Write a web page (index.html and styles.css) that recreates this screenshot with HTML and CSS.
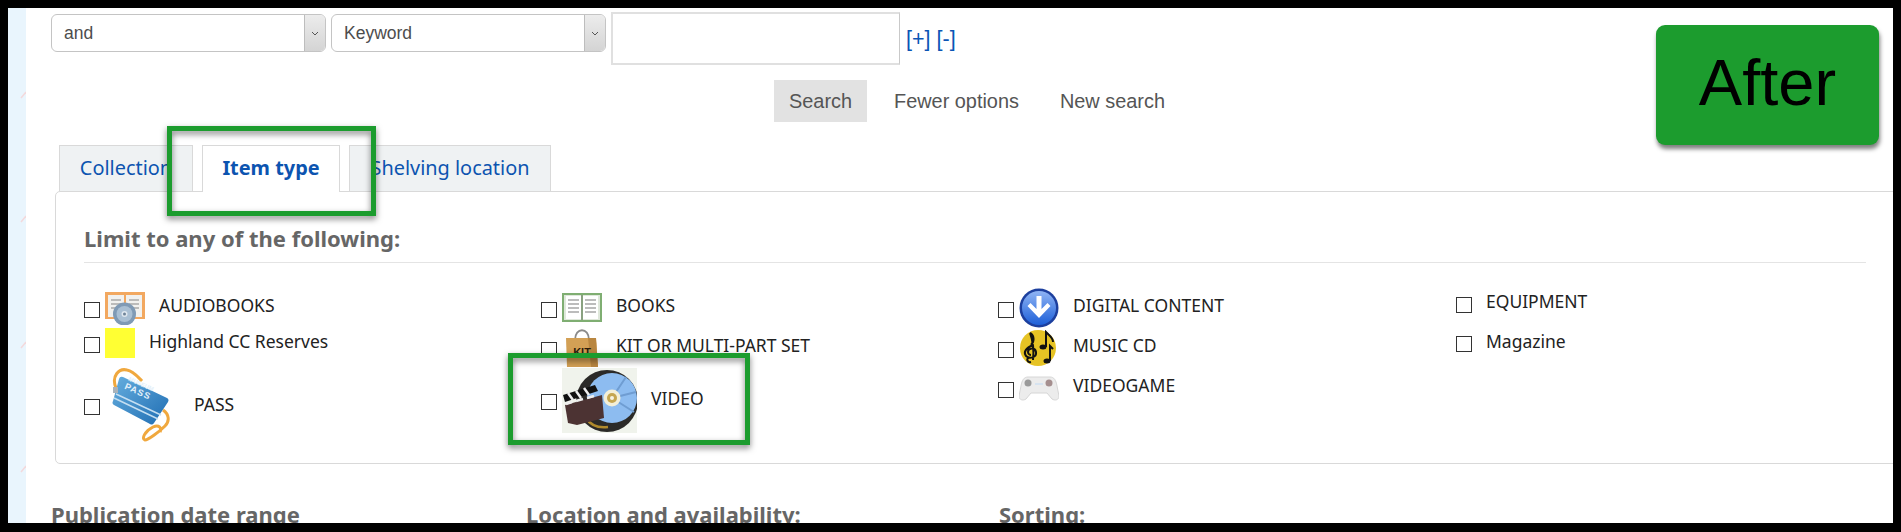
FILE: index.html
```html
<!DOCTYPE html>
<html lang="en">
<head>
<meta charset="utf-8">
<title>Advanced search</title>
<link rel="stylesheet" href="styles.css">
</head>
<body>
<div class="frame">
  <div class="strip">
    <svg width="18" height="516" viewBox="0 0 18 516"><g stroke="#f3d9dc" stroke-width="1.5" fill="none"><path d="M13 90l5-6"/><path d="M13 214l5-6"/><path d="M13 340l5-6"/><path d="M13 464l5-6"/></g></svg>
  </div>
  <main class="main">
    <div class="search-row">
      <div class="select"><span class="select-text">and</span><span class="select-btn"><svg width="8" height="5" viewBox="0 0 8 5"><path d="M1 1l3 3 3-3" fill="none" stroke="#555" stroke-width="1"/></svg></span></div>
      <div class="select"><span class="select-text">Keyword</span><span class="select-btn"><svg width="8" height="5" viewBox="0 0 8 5"><path d="M1 1l3 3 3-3" fill="none" stroke="#555" stroke-width="1"/></svg></span></div>
      <input class="term" type="text" aria-label="Search term">
      <span class="plusminus"><a href="#">[+]</a> <a href="#">[-]</a></span>
    </div>
    <div class="actions">
      <button class="btn-search" type="button">Search</button>
      <a class="act fewer" href="#">Fewer options</a>
      <a class="act new" href="#">New search</a>
    </div>
    <div class="tabs">
      <a class="tab tab-c" href="#">Collection</a>
      <a class="tab active" href="#">Item type</a>
      <a class="tab tab-s" href="#">Shelving location</a>
    </div>
    <section class="panel">
      <h3 class="limit">Limit to any of the following:</h3>
      <div class="items">
        <!-- row 1 -->
        <label class="item r1"><input class="cb" type="checkbox">
          <svg class="ic w40 t4" height="33" viewBox="0 0 40 33"><rect x="0" y="0" width="40" height="27" fill="#f2a860"/><rect x="3" y="3" width="16" height="22" fill="#f1f1ef"/><rect x="21" y="3" width="16" height="22" fill="#f1f1ef"/><g stroke="#a9a9a9" stroke-width="1.5"><path d="M6 8h10M6 12h10M6 16h10M24 8h10M24 12h10M24 16h10"/></g><circle cx="19.500" cy="22" r="11.500" fill="#7f9ab5"/><circle cx="19.500" cy="22" r="8" fill="#a9bfd3"/><circle cx="19.500" cy="22" r="3" fill="#dfe7ee"/><circle cx="19.500" cy="22" r="1.500" fill="#6f8398"/></svg>
          <span class="tx">AUDIOBOOKS</span></label>
        <label class="item r1"><input class="cb" type="checkbox">
          <svg class="ic w40 t5" height="29" viewBox="0 0 40 29"><rect width="40" height="29" fill="#7fae72"/><rect x="2" y="2" width="36" height="25" fill="#dfe8db"/><rect x="4" y="3" width="15" height="23" fill="#fff"/><rect x="21" y="3" width="15" height="23" fill="#fff"/><path d="M6 7h11M6 11h11M6 15h11M6 19h11M23 7h11M23 11h11M23 15h11M23 19h11" stroke="#a6a6a6" stroke-width="1.500"/><path d="M20 2v25" stroke="#6d8a62" stroke-width="1.500"/></svg>
          <span class="tx">BOOKS</span></label>
        <label class="item r1"><input class="cb" type="checkbox">
          <svg class="ic w40 t0" height="40" viewBox="0 0 40 40"><defs><linearGradient id="dg" x1="0" y1="0" x2="0" y2="1"><stop offset="0" stop-color="#8fb4f4"/><stop offset="1" stop-color="#1d5fd8"/></linearGradient></defs><circle cx="20" cy="20" r="19.500" fill="#1c3f9e"/><circle cx="20" cy="20" r="17" fill="url(#dg)"/><path d="M17.500 8h5v13l6-6 3 3-11.500 12L8.500 18l3-3 6 6z" fill="#fff"/></svg>
          <span class="tx">DIGITAL CONTENT</span></label>
        <label class="item noimg"><input class="cb" type="checkbox"><span class="tx">EQUIPMENT</span></label>
        <!-- row 2 -->
        <label class="item r2a"><input class="cb" type="checkbox"><span class="swatch"></span><span class="tx">Highland CC Reserves</span></label>
        <label class="item r2b"><input class="cb" type="checkbox">
          <svg class="ic w40 t1" height="38" viewBox="0 0 40 38"><path d="M13 11c0-13 14-13 14 0" fill="none" stroke="#8a8a8a" stroke-width="1.800"/><path d="M4 9h30l2 29H5z" fill="#d3a055"/><path d="M26 9h8l2 29h-7z" fill="#b98640"/><text x="20" y="27" class="kit">KIT</text></svg>
          <span class="tx">KIT OR MULTI-PART SET</span></label>
        <label class="item r2b"><input class="cb" type="checkbox">
          <svg class="ic w40 t2" height="36" viewBox="0 0 40 36"><circle cx="19" cy="18" r="18" fill="#e6c324"/><path d="M12 32c-4 1-5-4-2-4M11 3c3 8 4 18 3 27M14 15c-7 3-10 7-7 11 3 3 11 2 10-4-1-5-8-4-8 0 0 2 2 3 3 3M11 3c4 2 5 8 1 12" fill="none" stroke="#111" stroke-width="2"/><ellipse cx="24" cy="17" rx="3.500" ry="2.500" fill="#111"/><path d="M27 17V2l2 2c2 2 5 4 5 8" fill="none" stroke="#111" stroke-width="2"/><ellipse cx="28" cy="31" rx="3.500" ry="2.500" fill="#111"/><path d="M31 31V16l3 3" fill="none" stroke="#111" stroke-width="2"/></svg>
          <span class="tx">MUSIC CD</span></label>
        <label class="item noimg mag"><input class="cb" type="checkbox"><span class="tx">Magazine</span></label>
        <!-- row 3 -->
        <label class="item r3a"><input class="cb" type="checkbox">
          <svg class="ic w75 t0" height="75" viewBox="0 0 75 75"><defs><linearGradient id="pg" x1="0" y1="0" x2="1" y2="1"><stop offset="0" stop-color="#66aede"/><stop offset="1" stop-color="#1f6db3"/></linearGradient></defs><path d="M11 20C6 8 14 0 22 2c6 1 10 6 15 11M58 42c6 4 7 11 2 16-6 6-17 14-20 14-4-1 0-9 8-13 6-3 9 1 7 5" fill="none" stroke="#f0a83e" stroke-width="3"/><path d="M18 9 62 30a3 3 0 0 1 1 4L49 55a3 3 0 0 1-4 1L9 37a3 3 0 0 1-1-4L14 11a3 3 0 0 1 4-2z" fill="url(#pg)"/><path d="M9 30 53 51M11 26 56 47" stroke="#c5dff2" stroke-width="1.500"/><g transform="rotate(24 30 20)"><text x="34" y="16" class="mus">MUSEUM</text><text x="34" y="25" class="pas">PASS</text></g><rect x="8" y="19" width="5" height="6" fill="#a9b3bb"/></svg>
          <span class="tx">PASS</span></label>
        <label class="item r3b"><input class="cb" type="checkbox">
          <svg class="ic w75 t0" height="65" viewBox="0 0 75 65"><rect width="75" height="65" fill="#f0f3ec"/><circle cx="45" cy="33" r="31" fill="#2b2a28"/><path d="M24 50c5 8 14 10 22 9" stroke="#b08a2c" stroke-width="2.500" fill="none"/><circle cx="50" cy="30" r="25" fill="#8dbcf0"/><path d="M50 30 74 24M50 30 64 9M50 30 72 44" stroke="#6f9dd2" stroke-width="2"/><circle cx="50" cy="30" r="8.500" fill="#f3efd8"/><circle cx="50" cy="30" r="5" fill="#c5a650"/><circle cx="50" cy="30" r="2" fill="#f7f4e4"/><path d="M3 37 40 27l2 23-27 7-9-2z" fill="#4c3333"/><path d="M1 27 33 17l3 6L3 34z" fill="#111"/><path d="M6 25l5 7M14 23l5 7M22 20l5 7M4 36l6-2M14 33l7-2M25 30l7-2" stroke="#eee" stroke-width="2.500"/></svg>
          <span class="tx">VIDEO</span></label>
        <label class="item r3c"><input class="cb" type="checkbox">
          <svg class="ic w40 t2b" height="25" viewBox="0 0 40 25"><path d="M9 1h22c4 0 6 3 7 9l2 10c0 4-4 5-7 3l-5-6H12l-5 6c-3 2-7 1-7-3l2-10C3 4 5 1 9 1z" fill="#ececec" stroke="#d6d6d6"/><circle cx="9" cy="7" r="3.500" fill="#9a9a9a"/><circle cx="30" cy="7" r="3.500" fill="#a58f8f"/><path d="M16 8h8" stroke="#cfe0f2" stroke-width="1.500"/></svg>
          <span class="tx">VIDEOGAME</span></label>
      </div>
    </section>
    <div class="lower">
      <h3 class="lower-h">Publication date range</h3>
      <h3 class="lower-h">Location and availability:</h3>
      <h3 class="lower-h">Sorting:</h3>
    </div>
    <div class="callout callout-tab"></div>
    <div class="callout callout-video"></div>
    <div class="badge">After</div>
  </main>
</div>
</body>
</html>
```
FILE: styles.css
```css
* { box-sizing: border-box; }
html, body { margin: 0; padding: 0; background: #000; }
.frame {
  width: 1901px; height: 532px;
  border: 8px solid #000;
  border-bottom-width: 9px;
  display: flex;
  overflow: hidden;
  background: #fff;
}
.strip { width: 18px; flex: none; background: #e9f5fd; }
.strip svg { display: block; }
.main {
  position: relative;
  flex: 1;
  min-width: 0;
  padding-left: 25px;
  font-family: "Noto Sans", sans-serif;
  overflow: hidden;
}
.search-row { display: flex; align-items: flex-start; padding-top: 4px; height: 57px; }
.select {
  width: 275px; height: 38px;
  margin: 2px 5px 0 0;
  display: flex;
  border: 1px solid #c4c4c4;
  border-radius: 6px;
  overflow: hidden;
  font: 17.500px "Liberation Sans", sans-serif;
  color: #4d4d4d;
}
.select-text { flex: 1; padding: 0 0 0 12px; line-height: 37px; }
.select-btn {
  width: 21px;
  background: linear-gradient(#ececec, #d4d4d4);
  border-left: 1px solid #bdbdbd;
  display: flex; align-items: center; justify-content: center;
}
.term {
  width: 289px; height: 53px;
  border: 1px solid #c9c9c9;
  border-top: 2px solid #e0e0e0;
  border-left: 2px solid #e0e0e0;
  border-bottom: 2px solid #e0e0e0;
  background: #fff;
  margin: 0;
}
.plusminus { margin: 15px 0 0 6px; font: 21.500px/24px "Liberation Sans", sans-serif; color: #0b55b5; }
.plusminus a { color: inherit; text-decoration: none; }
.actions { display: flex; align-items: center; margin: 15px 0 0 723px; height: 42px; font: 19.900px "Liberation Sans", sans-serif; }
.btn-search {
  width: 93px; height: 42px;
  border: 0; padding: 0;
  background: #e2e2e2;
  color: #555;
  font: inherit;
}
.act { color: #555; text-decoration: none; }
.fewer { margin-left: 27px; }
.new { margin-left: 41px; }
.tabs { display: flex; margin: 23px 0 -1px 8px; gap: 9px; height: 47px; position: relative; z-index: 1; font-size: 19.900px; }
.tab {
  height: 46px;
  border: 1px solid #d9d9d9;
  border-bottom: 0;
  background: #eff2f3;
  color: #0c54b0;
  text-decoration: none;
  text-align: center;
  line-height: 44px;
}
.tab-c { width: 134px; }
.active { width: 138px; height: 47px; background: #fff; font-weight: 700; }
.tab-s { width: 202px; }
.panel {
  width: 1860px; height: 273px;
  margin-left: 4px;
  padding: 0 48px 0 28px;
  border: 1px solid #d9d9d9;
  border-radius: 5px;
}
.limit {
  margin: 0;
  height: 71px;
  padding: 31px 0 0 0;
  font-size: 22px;
  line-height: 30px;
  font-weight: 700;
  color: #666;
  border-bottom: 1px solid #e4e4e4;
}
.items {
  display: grid;
  grid-template-columns: 457px 457px 458px 1fr;
  grid-template-rows: 40px 40px 75px;
  margin-top: 25px;
  font-size: 17.500px;
  color: #222;
}
.item { display: flex; align-items: flex-start; gap: 5px; --cb: 14px; --tx: 5px; }
.cb {
  appearance: none;
  width: 16px; height: 16px;
  margin: var(--cb) 0 0;
  flex: none;
  border: 1.5px solid #333;
  background: #fff;
}
.tx { margin: var(--tx) 0 0 9px; line-height: 24px; white-space: nowrap; }
.noimg { --cb: 9px; --tx: 1px; }
.r2a { --cb: 9px; --tx: 1px; }
.mag { --cb: 8px; --tx: 1px; }
.r2b { --cb: 14px; --tx: 5px; }
.r3a { --cb: 31px; --tx: 24px; }
.r3b { --cb: 26px; --tx: 18px; }
.r3c { --cb: 14px; --tx: 5px; }
.ic { flex: none; display: block; }
.w40 { width: 40px; }
.w75 { width: 75px; }
.t0 { margin-top: 0; }
.t1 { margin-top: 1px; }
.t2 { margin-top: 2px; }
.t2b { margin-top: 8px; }
.t4 { margin-top: 4px; }
.t5 { margin-top: 5px; }
.swatch { width: 30px; height: 30px; flex: none; background: #ffff33; }
.kit { font: 700 11px "Liberation Sans", sans-serif; fill: #2b1d0c; text-anchor: middle; }
.mus { font: 700 6px "Liberation Sans", sans-serif; fill: #e3f0fa; text-anchor: middle; }
.pas { font: 700 9px "Liberation Sans", sans-serif; fill: #e3f0fa; text-anchor: middle; letter-spacing: 1px; }
.lower { display: grid; grid-template-columns: 475px 473px 1fr; margin-top: 35px; }
.lower-h { margin: 0; font-size: 22px; line-height: 30px; font-weight: 700; color: #666; white-space: nowrap; }
.callout {
  position: absolute;
  z-index: 2;
  border: 5px solid #1c9c2e;
  filter: drop-shadow(0 3px 3px rgba(0, 0, 0, .5));
}
.callout-tab { left: 141px; top: 118px; width: 209px; height: 90px; }
.callout-video { left: 482px; top: 345px; width: 242px; height: 92px; }
.badge {
  position: absolute;
  left: 1630px; top: 17px;
  width: 223px; height: 120px;
  background: #1c9c2e;
  border-radius: 9px;
  box-shadow: 1px 4px 4px rgba(0, 0, 0, .5);
  color: #000;
  font: 65px/116px "Liberation Sans", sans-serif;
  text-align: center;
}
```
